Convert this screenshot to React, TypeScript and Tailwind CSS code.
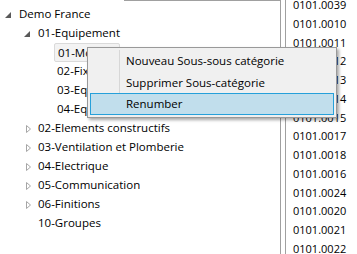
const tree = [
  { label: "Demo France", level: 0, glyph: "open" },
  { label: "01-Equipement", level: 1, glyph: "open" },
  { label: "01-Mobilier", level: 2, glyph: "none", selected: true },
  { label: "02-Fixations", level: 2, glyph: "none" },
  { label: "03-Equipements sanitaires", level: 2, glyph: "none" },
  { label: "04-Equipements divers", level: 2, glyph: "none" },
  { label: "02-Elements constructifs", level: 1, glyph: "closed" },
  { label: "03-Ventilation et Plomberie", level: 1, glyph: "closed" },
  { label: "04-Electrique", level: 1, glyph: "closed" },
  { label: "05-Communication", level: 1, glyph: "closed" },
  { label: "06-Finitions", level: 1, glyph: "closed" },
  { label: "10-Groupes", level: 1, glyph: "none" },
];

const codes = [
  "0101.0039",
  "0101.0010",
  "0101.0011",
  "0101.0012",
  "0101.0013",
  "0101.0014",
  "0101.0015",
  "0101.0017",
  "0101.0018",
  "0101.0016",
  "0101.0024",
  "0101.0020",
  "0101.0021",
  "0101.0022",
];

const menuItems = [
  { label: "Nouveau Sous-sous catégorie" },
  { label: "Supprimer Sous-catégorie" },
  { label: "Renumber", active: true },
];

export default function App() {
  return (
    <div className="relative w-[357px] h-[254px] overflow-hidden bg-white text-[11.5px] text-black font-['Open_Sans',sans-serif]">
      <div className="flex h-full">
        {/* TREE */}
        <div className="w-[281px] shrink-0 border-r border-[#a0a0a0] pt-[5px]">
          {tree.map((node) => (
            <TreeRow key={node.label} {...node} />
          ))}
        </div>

        {/* CODES */}
        <div className="ml-[4px] border-l border-[#a0a0a0] pl-[7px] -mt-[4px] text-[11px]">
          {codes.map((c) => (
            <div key={c} className="h-[18.77px] leading-[18.77px] whitespace-nowrap">
              {c}
            </div>
          ))}
        </div>
      </div>

      {/* edge of the box above */}
      <div className="absolute left-[124px] top-0 w-[157px] h-px bg-[#a0a0a0]" />

      {/* CONTEXT MENU */}
      <div className="absolute left-[87px] top-[47px] w-[250px] border border-[#999999] bg-[#f0f0f0] p-[2px] shadow-[2px_2px_3px_rgba(0,0,0,0.35)]">
        <div className="absolute left-[31px] top-[2px] bottom-[2px] w-px bg-[#d7d7d7]" />
        {menuItems.map((m) => (
          <div
            key={m.label}
            className={
              m.active
                ? "relative h-[21.5px] flex items-center pl-[35px] border border-[#26a0da] bg-[#c1deec] whitespace-nowrap"
                : "relative h-[21.5px] flex items-center pl-[35px] border border-transparent whitespace-nowrap"
            }
          >
            {m.label}
          </div>
        ))}
      </div>
    </div>
  );
}

function TreeRow({
  label,
  level,
  glyph,
  selected,
}: {
  label: string;
  level: number;
  glyph: string;
  selected?: boolean;
}) {
  return (
    <div className="flex h-[19px] items-center" style={{ paddingLeft: level * 19 }}>
      <div className="w-[19px] h-[19px] shrink-0 flex items-center">
        {glyph === "open" && (
          <svg width="6" height="6" viewBox="0 0 6 6" className="ml-[5px]">
            <path d="M6,0 L6,6 L0,6 Z" fill="#595959" />
          </svg>
        )}
        {glyph === "closed" && (
          <svg width="5" height="8" viewBox="0 0 5 8" className="ml-[7px]">
            <path d="M0.5,0.5 L4.5,4 L0.5,7.5 Z" fill="white" stroke="#a6a6a6" strokeWidth="1" />
          </svg>
        )}
      </div>
      <div
        className={
          selected
            ? "h-[19px] w-[66px] -ml-[3px] pl-[3px] leading-[17px] border border-[#dadada] bg-[#f3f3f3] rounded-[2px] whitespace-nowrap"
            : "h-[19px] leading-[18px] whitespace-nowrap"
        }
      >
        {label}
      </div>
    </div>
  );
}
